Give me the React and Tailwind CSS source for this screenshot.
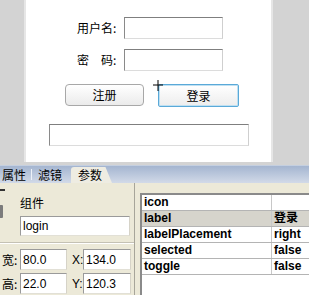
import React from "react";

const inset =
  "bg-white border border-t-[#7f7f7f] border-l-[#8a8a8a] border-r-[#cfcfcf] border-b-[#dcdcdc]";
const fieldBox =
  "bg-white border border-t-[#9a9a9a] border-l-[#9a9a9a] border-r-[#d6d3c8] border-b-[#e2e0d6] flex items-center pl-[2px] font-['Liberation_Sans',sans-serif] text-[12px]";

const params = [
  { name: "icon", value: "" },
  { name: "label", value: "登录", active: true },
  { name: "labelPlacement", value: "right" },
  { name: "selected", value: "false" },
  { name: "toggle", value: "false" },
];

function Stage() {
  return (
    <div className="h-[165px] bg-[#d3d3d3] pl-[24px]">
      <div className="relative w-[249px] h-[162px] bg-white border-x-2 border-x-[#e6e6e6] pt-[17px] flex flex-col">
        <div className="flex items-center ml-[51px]">
          <span className="w-[41px] whitespace-nowrap">用户名:</span>
          <div className={`ml-[6px] w-[99px] h-[22px] ${inset}`} />
        </div>
        <div className="flex items-center ml-[51px] mt-[10px]">
          <span className="w-[41px] whitespace-nowrap">密　码:</span>
          <div className={`ml-[6px] w-[99px] h-[22px] ${inset}`} />
        </div>
        <div className="flex items-start ml-[39px] mt-[13px] gap-[14px]">
          <button className="w-[79px] h-[22px] rounded-[4px] border border-[#a8a8a8] bg-linear-to-b from-white to-[#ebebeb] text-[12px] leading-none">
            注册
          </button>
          <button className="w-[81px] h-[23px] rounded-[2px] border border-[#5aa9d8] shadow-[inset_0_0_0_1px_#bfe0f2] bg-linear-to-b from-white to-[#ededed] text-[12px] leading-none">
            登录
          </button>
        </div>
        <div className={`ml-[23px] mt-[17px] w-[200px] h-[22px] ${inset}`} />

        {/* crosshair cursor */}
        <svg className="absolute left-[127px] top-[80px]" width="10" height="11" viewBox="0 0 10 11">
          <path d="M5 0V11M0 5H10" stroke="#000" strokeWidth="1" />
        </svg>
      </div>
    </div>
  );
}

function Tabs() {
  return (
    <div className="h-[18px] flex items-end bg-linear-to-b from-[#a4b5d0] to-[#d2dae8] border-t border-t-[#c4cfe0]">
      <div className="h-full flex items-center pl-[2px] w-[31px]">属性</div>
      <div className="h-[11px] w-px bg-[#eef2f8] mb-[3px]" />
      <div className="h-full flex items-center pl-[6px] w-[39px]">滤镜</div>
      <div className="h-[16px] w-[41px] pl-[7px] flex items-center bg-[#eeece2] rounded-tl-[3px] [clip-path:polygon(0_0,84%_0,100%_100%,0_100%)]">
        参数
      </div>
    </div>
  );
}

function Props() {
  return (
    <div className="w-[135px] h-full flex border-r border-r-[#a7a59a] relative">
      <div className="absolute left-0 top-[6px] w-[5px] h-[2px] bg-[#333]" />
      <div className="absolute left-0 top-[22px] w-[3px] h-[13px] bg-[#7c7c7c] rounded-r-[1px]" />
      <div className="flex flex-col w-full">
        <div className="mt-[12px] ml-[20px] leading-[16px]">组件</div>
        <div className={`mt-[5px] ml-[20px] w-[110px] h-[20px] ${fieldBox}`}>login</div>
        <div className="mt-[6px] h-[2px] border-t border-t-[#c4c1b4] border-b border-b-white" />
        <div className="mt-[5px] flex items-center">
          <span className="w-[20px] pl-[2px]">宽:</span>
          <div className={`w-[47px] h-[21px] ${fieldBox}`}>80.0</div>
          <span className="ml-[5px] w-[11px] font-['Liberation_Sans',sans-serif]">X:</span>
          <div className={`w-[48px] h-[21px] ${fieldBox}`}>134.0</div>
        </div>
        <div className="mt-[3px] flex items-center">
          <span className="w-[20px] pl-[2px]">高:</span>
          <div className={`w-[47px] h-[21px] ${fieldBox}`}>22.0</div>
          <span className="ml-[5px] w-[11px] font-['Liberation_Sans',sans-serif]">Y:</span>
          <div className={`w-[48px] h-[21px] ${fieldBox}`}>120.3</div>
        </div>
      </div>
    </div>
  );
}

function ParamTable() {
  return (
    <div className="flex-1 pl-[5px] pt-[10px]">
      <div className="h-full bg-white border-t-2 border-l-2 border-t-[#8a8a8a] border-l-[#8a8a8a] font-['Liberation_Sans',sans-serif] font-bold text-[12px]">
        {params.map((p) => (
          <div
            key={p.name}
            className={`flex h-[16px] border-b border-b-[#b4b4b4] ${p.active ? "bg-[#d6d4cc]" : ""}`}
          >
            <div className="w-[130px] pl-[2px] leading-[15px] border-r border-r-[#c8c8c8]">{p.name}</div>
            <div className="flex-1 pl-[2px] leading-[15px] font-['Liberation_Sans','Noto_Sans_CJK_SC',sans-serif]">
              {p.value}
            </div>
          </div>
        ))}
      </div>
    </div>
  );
}

export default function App() {
  return (
    <div className="w-[309px] h-[295px] overflow-hidden bg-[#ece9d8] text-black text-[12px] font-['Noto_Sans_CJK_SC',sans-serif]">
      <Stage />
      <Tabs />
      <div className="h-[112px] flex">
        <Props />
        <ParamTable />
      </div>
    </div>
  );
}
